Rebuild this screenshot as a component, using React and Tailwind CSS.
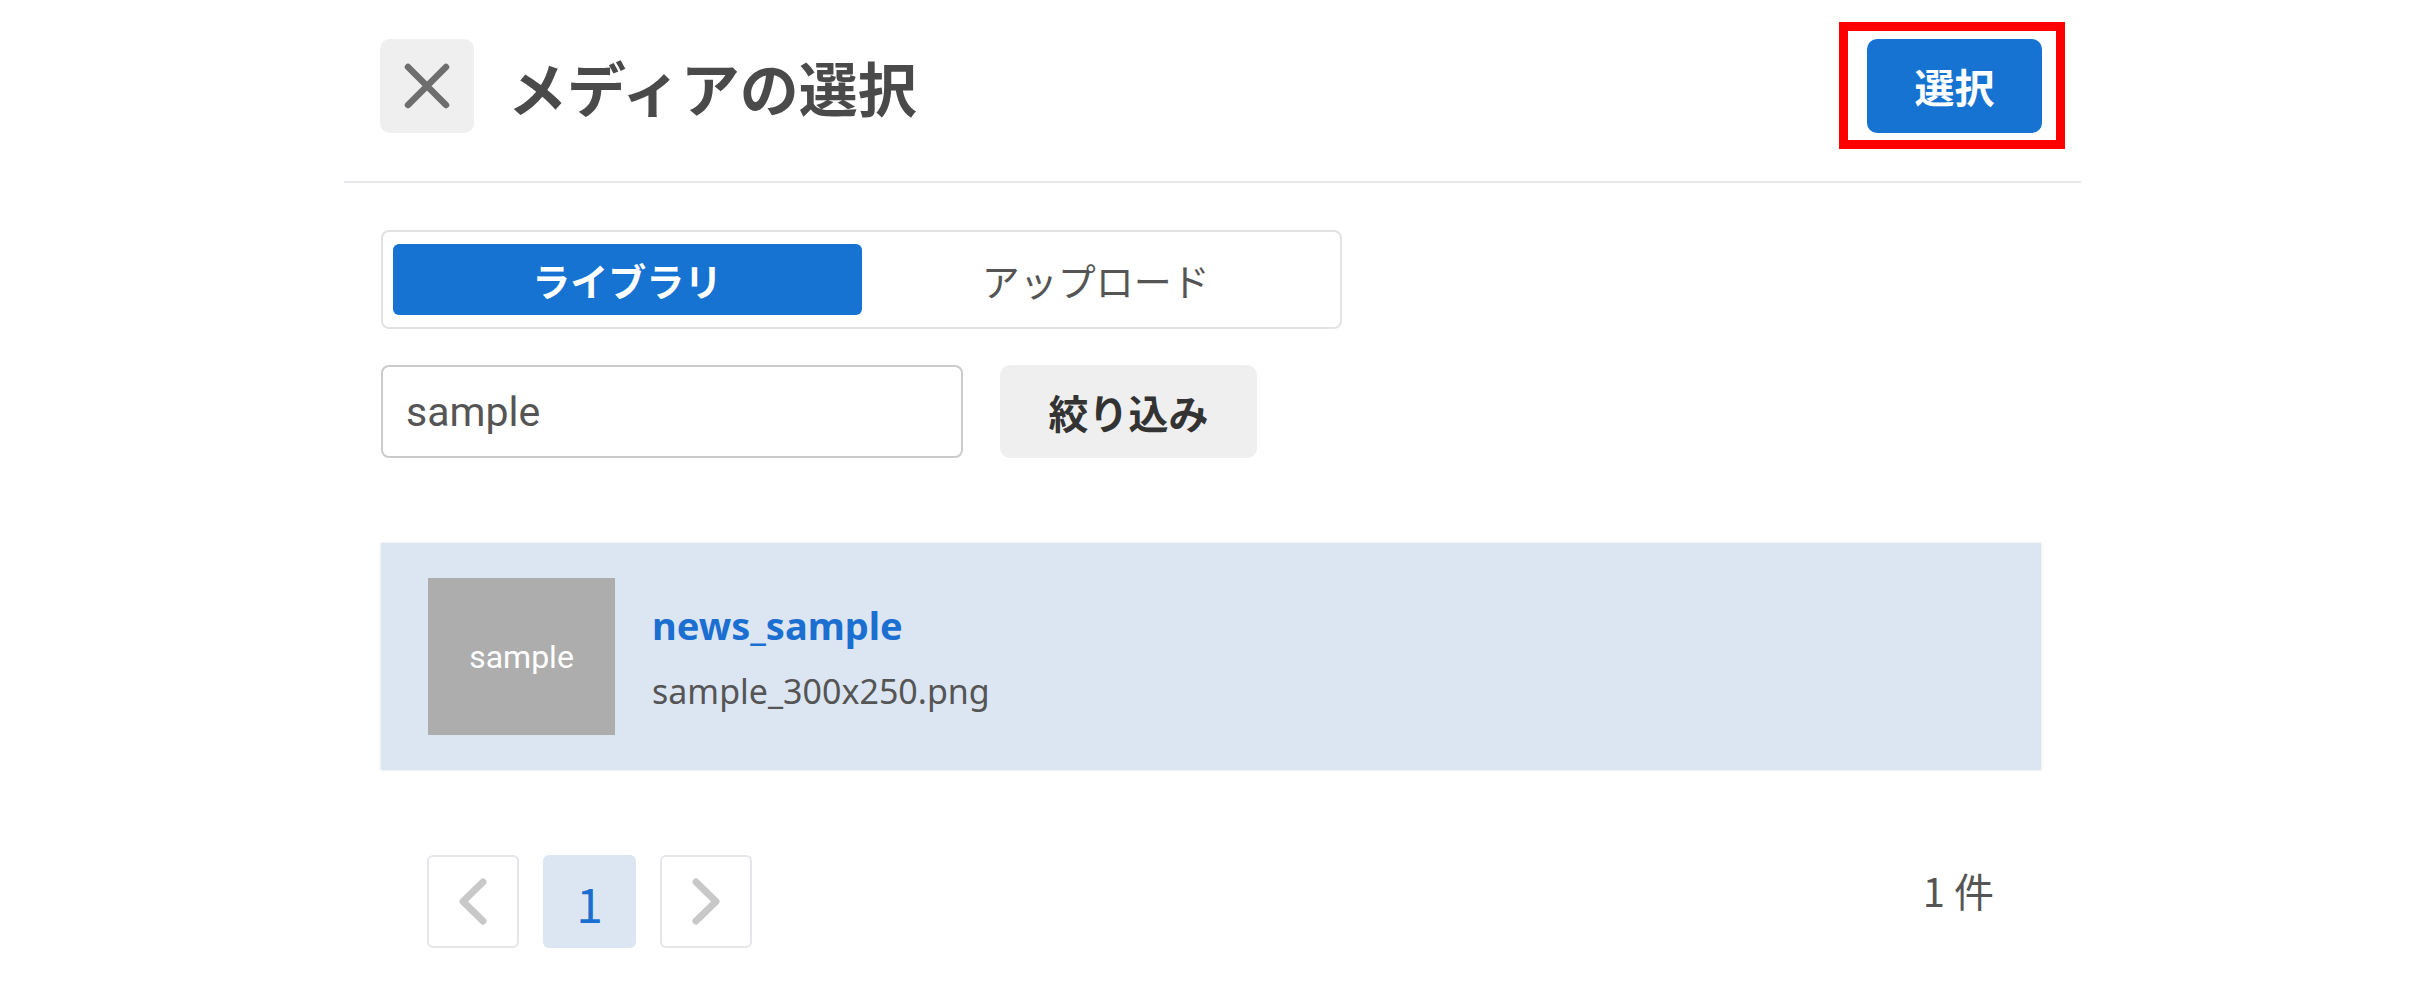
import { useState } from "react";

function CloseIcon() {
  return (
    <svg width="46" height="46" viewBox="0 0 46 46" fill="none">
      <path d="M4 4L42 42M42 4L4 42" stroke="#6e6e6e" strokeWidth="6.5" strokeLinecap="round" />
    </svg>
  );
}

function Chevron({ dir }) {
  return (
    <svg width="28" height="47" viewBox="0 0 28 47" fill="none">
      {dir === "left" ? (
        <path d="M24 4L4 23.5L24 43" stroke="#c8c8c8" strokeWidth="7" strokeLinecap="round" strokeLinejoin="round" />
      ) : (
        <path d="M4 4L24 23.5L4 43" stroke="#c8c8c8" strokeWidth="7" strokeLinecap="round" strokeLinejoin="round" />
      )}
    </svg>
  );
}

export default function App() {
  const [tab, setTab] = useState("library");
  const [query, setQuery] = useState("sample");

  return (
    <div className="min-h-screen bg-white font-['Noto_Sans','Noto_Sans_CJK_JP',sans-serif]">
      <div className="mx-auto w-[1737px]">
        {/* header */}
        <header className="flex items-center justify-between border-b-2 border-[#e8e9ee] pl-[36px] pr-[39px] pt-[39px] pb-[48px]">
          <div className="flex items-center gap-[34px]">
            <button className="flex h-[94px] w-[94px] items-center justify-center rounded-[10px] bg-[#efefef]">
              <CloseIcon />
            </button>
            <h1 className="font-['Noto_Sans_CJK_JP',sans-serif] text-[59px] font-bold leading-none text-[#4a4a4a]">
              メディアの選択
            </h1>
          </div>
          <div className="relative">
            <button className="h-[94px] w-[175px] rounded-[10px] bg-[#1673d1] font-['Noto_Sans_CJK_JP',sans-serif] text-[40px] font-bold text-white">
              選択
            </button>
            <span className="pointer-events-none absolute -top-[17px] -bottom-[16px] -left-[28px] -right-[23px] border-[9px] border-[#ff0000]" />
          </div>
        </header>

        <main className="pl-[37px] pr-[40px] pt-[47px]">
          {/* tabs */}
          <div className="flex h-[99px] w-[961px] items-center rounded-[8px] border-2 border-[#e2e2e2] px-[10px]">
            <button
              onClick={() => setTab("library")}
              className={
                tab === "library"
                  ? "h-[71px] flex-1 rounded-[6px] bg-[#1673d1] font-['Noto_Sans_CJK_JP',sans-serif] text-[38px] font-bold text-white"
                  : "h-[71px] flex-1 rounded-[6px] font-['Noto_Sans_CJK_JP',sans-serif] text-[38px] text-[#555]"
              }
            >
              ライブラリ
            </button>
            <button
              onClick={() => setTab("upload")}
              className={
                tab === "upload"
                  ? "h-[71px] flex-1 rounded-[6px] bg-[#1673d1] font-['Noto_Sans_CJK_JP',sans-serif] text-[38px] font-bold text-white"
                  : "h-[71px] flex-1 rounded-[6px] font-['Noto_Sans_CJK_JP',sans-serif] text-[38px] text-[#555]"
              }
            >
              アップロード
            </button>
          </div>

          {/* search */}
          <div className="mt-[36px] flex items-center gap-[37px]">
            <input
              value={query}
              onChange={(e) => setQuery(e.target.value)}
              className="h-[93px] w-[582px] rounded-[8px] border-2 border-[#cbcbcb] pl-[23px] font-['Roboto',sans-serif] text-[41px] text-[#555] outline-none"
            />
            <button className="h-[93px] w-[257px] rounded-[10px] bg-[#efefef] font-['Noto_Sans_CJK_JP',sans-serif] text-[40px] font-bold text-[#333]">
              絞り込み
            </button>
          </div>

          {/* media list */}
          <div className="mt-[85px] flex h-[227px] items-center bg-[#dce6f2] pl-[47px] shadow-[0_0_3px_rgba(0,0,0,0.12)]">
            <div className="flex h-[157px] w-[187px] items-center justify-center bg-[#adadad] font-['Roboto',sans-serif] text-[32px] text-white">
              sample
            </div>
            <div className="ml-[37px] flex flex-col">
              <span className="text-[38px] font-bold leading-[44px] text-[#1a6fd0]">news_sample</span>
              <span className="mt-[24px] text-[34px] leading-[40px] text-[#555]">sample_300x250.png</span>
            </div>
          </div>

          {/* pagination */}
          <div className="mt-[85px] flex items-center justify-between pl-[46px] pr-[47px]">
            <div className="flex gap-[24px]">
              <button className="flex h-[93px] w-[92px] items-center justify-center rounded-[6px] border-2 border-[#e6e6ea]">
                <Chevron dir="left" />
              </button>
              <button className="flex h-[93px] w-[93px] items-center justify-center rounded-[6px] bg-[#dce6f2] font-['Noto_Sans_CJK_JP',sans-serif] text-[48px] text-[#1a6fd0]">
                1
              </button>
              <button className="flex h-[93px] w-[92px] items-center justify-center rounded-[6px] border-2 border-[#e6e6ea]">
                <Chevron dir="right" />
              </button>
            </div>
            <span className="mb-[24px] font-['Noto_Sans_CJK_JP',sans-serif] text-[40px] text-[#555]">1 件</span>
          </div>
        </main>
      </div>
    </div>
  );
}
